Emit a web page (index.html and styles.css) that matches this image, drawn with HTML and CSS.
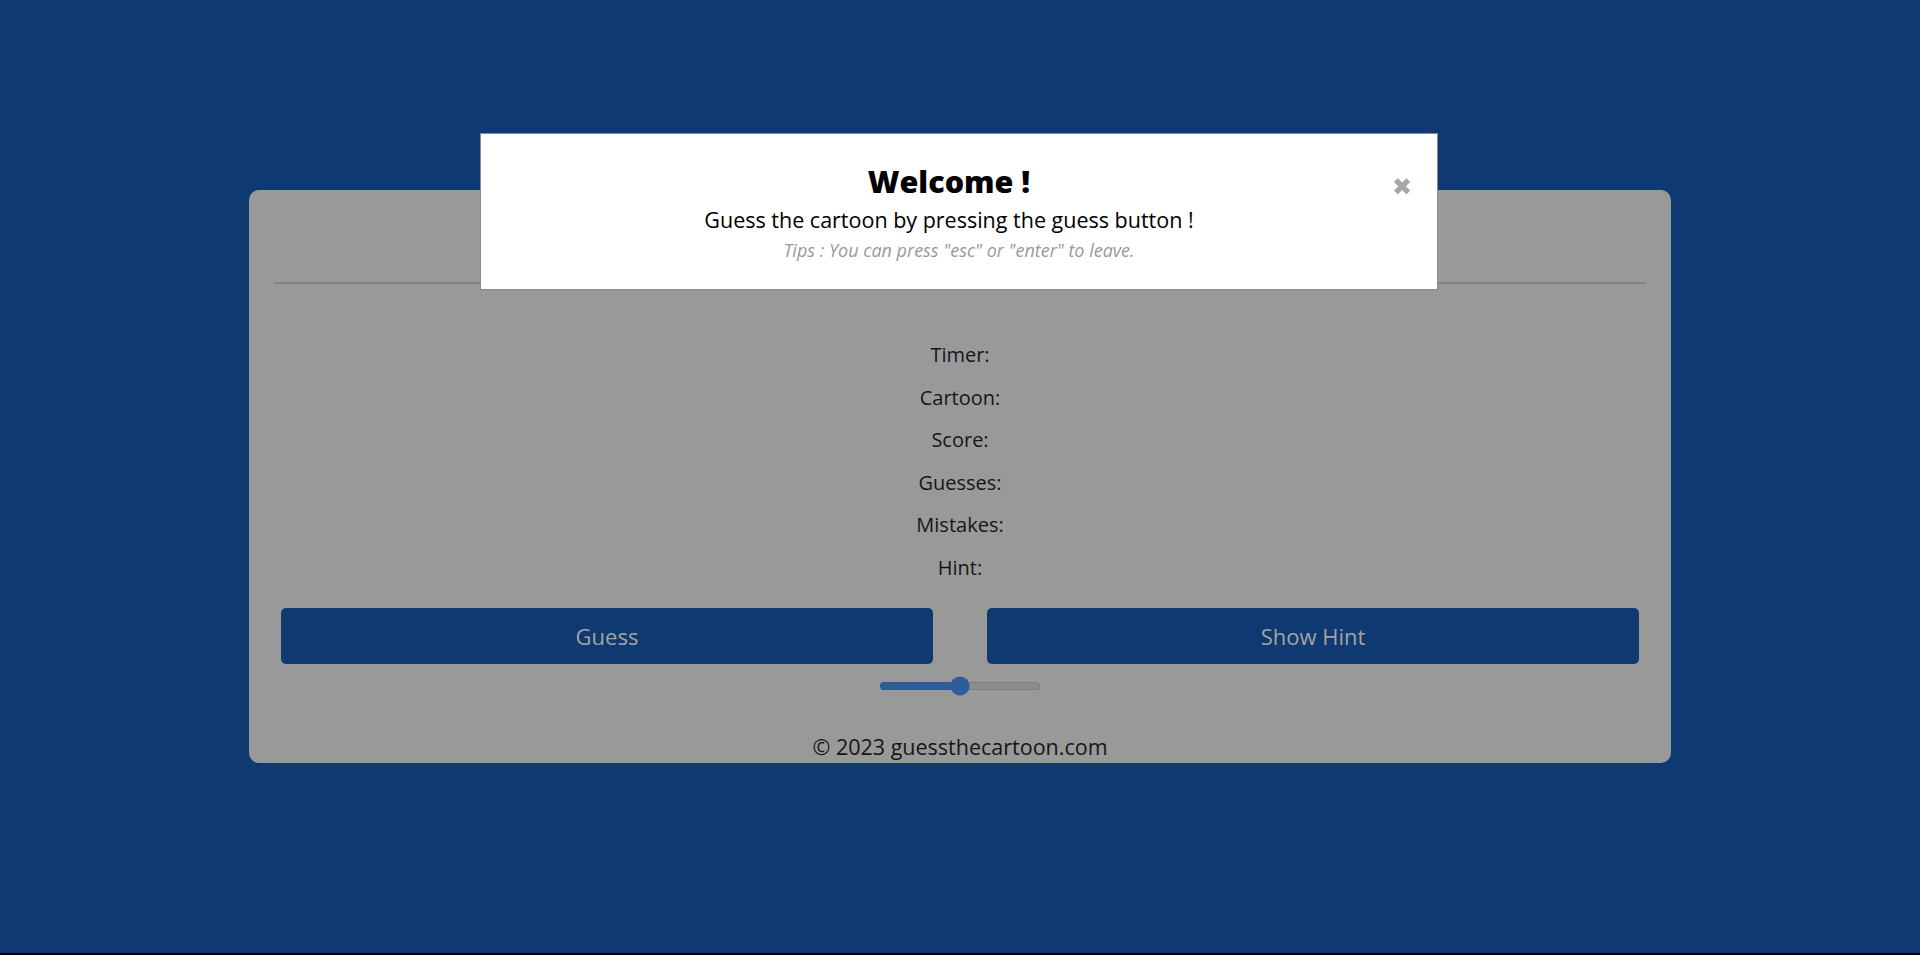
FILE: index.html
```html
<!DOCTYPE html>
<html lang="en">
<head>
<meta charset="utf-8">
<title>Guess the cartoon</title>
<link rel="stylesheet" href="styles.css">
</head>
<body>
<div class="page">
  <main class="card">
    <header class="card-head"></header>
    <hr class="divider">
    <section class="stats">
      <div class="stat">Timer:</div>
      <div class="stat">Cartoon:</div>
      <div class="stat">Score:</div>
      <div class="stat">Guesses:</div>
      <div class="stat">Mistakes:</div>
      <div class="stat">Hint:</div>
    </section>
    <div class="actions">
      <button class="btn">Guess</button>
      <button class="btn">Show Hint</button>
    </div>
    <div class="slider-row">
      <div class="slider">
        <div class="slider-fill" style="width:50%"></div>
        <div class="slider-thumb" style="left:50%"></div>
      </div>
    </div>
    <footer class="foot">© 2023 guessthecartoon.com</footer>
  </main>

  <div class="modal">
    <h1 class="modal-title">Welcome !</h1>
    <p class="modal-text">Guess the cartoon by pressing the guess button !</p>
    <p class="modal-tip">Tips : You can press "esc" or "enter" to leave.</p>
    <span class="modal-close">✖</span>
  </div>
</div>
</body>
</html>
```

FILE: styles.css
```css
html {
  background: #000;
}
body {
  margin: 0;
  font-family: "Open Sans", "Noto Sans", sans-serif;
}
.page {
  position: relative;
  height: 953px;
  background: #0e3a71;
  padding-top: 190px;
  box-sizing: border-box;
}
.card {
  width: 1422px;
  height: 573px;
  margin: 0 auto;
  background: #999999;
  border-radius: 10px;
  box-sizing: border-box;
  padding: 0 25px;
  display: flex;
  flex-direction: column;
}
.card-head {
  height: 92px;
}
.divider {
  margin: 0;
  border: 0;
  height: 2px;
  background: #838383;
}
.stats {
  padding-top: 50px;
  display: flex;
  flex-direction: column;
  align-items: center;
}
.stat {
  height: 42.6px;
  line-height: 42.6px;
  font-size: 20px;
  color: #161616;
}
.actions {
  display: flex;
  gap: 54px;
  padding: 0 7px;
  margin-top: 18px;
}
.btn {
  flex: 1;
  height: 56px;
  border: 0;
  border-radius: 5px;
  background: #0e3a71;
  color: #a3a3a3;
  font-family: "Open Sans", "Noto Sans", sans-serif;
  font-size: 22px;
  padding: 0;
}
.slider-row {
  display: flex;
  justify-content: center;
  margin-top: 12px;
  height: 20px;
  align-items: center;
}
.slider {
  position: relative;
  width: 160px;
  height: 8px;
  border-radius: 4px;
  background: #8c8c8c;
  box-shadow: inset 0 0 0 1px #7d7d7d;
}
.slider-fill {
  height: 100%;
  border-radius: 4px;
  background: #2d5d9a;
}
.slider-thumb {
  position: absolute;
  top: 50%;
  width: 19px;
  height: 19px;
  border-radius: 50%;
  background: #2d5d9a;
  transform: translate(-50%, -50%);
}
.foot {
  margin-top: 36px;
  text-align: center;
  font-size: 21.5px;
  line-height: 30px;
  color: #161616;
}
.modal {
  position: absolute;
  top: 133px;
  left: 480px;
  width: 958px;
  height: 157px;
  box-sizing: border-box;
  background: #fff;
  border: 1px solid #8a8a8a;
  text-align: center;
  padding-top: 25px;
}
.modal-title {
  margin: 0;
  padding-right: 20px;
  font-size: 30.5px;
  line-height: 44px;
  font-weight: 800;
  color: #000;
}
.modal-text {
  margin: 0;
  padding-right: 20px;
  font-size: 21.5px;
  line-height: 34px;
  color: #000;
}
.modal-tip {
  margin: 0;
  font-size: 18px;
  line-height: 26px;
  font-style: italic;
  color: #999;
}
.modal-close {
  position: absolute;
  top: 40px;
  right: 25px;
  font-size: 24px;
  line-height: 24px;
  color: #a6a6a6;
}
```
